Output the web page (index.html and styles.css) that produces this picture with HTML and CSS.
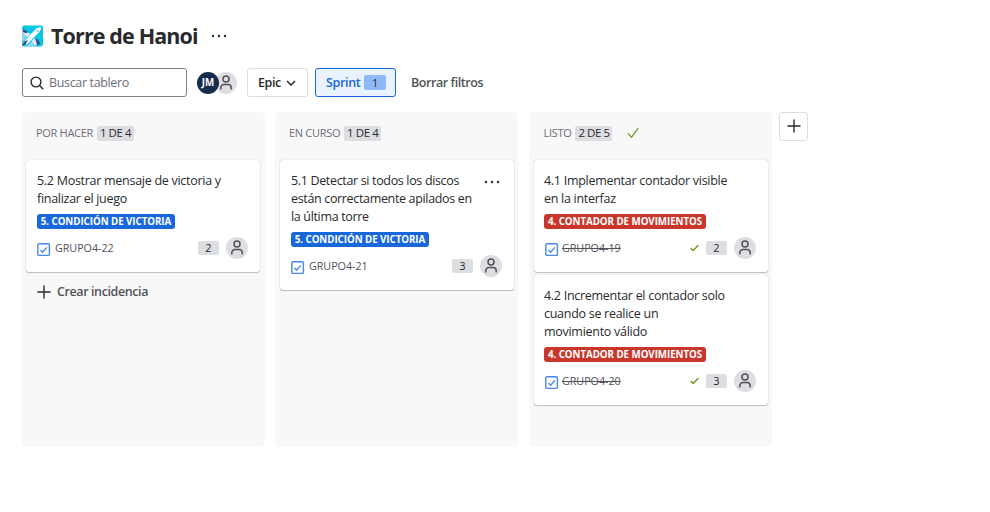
FILE: index.html
```html
<!DOCTYPE html>
<html lang="es">
<head>
<meta charset="utf-8">
<title>Torre de Hanoi</title>
<link rel="stylesheet" href="styles.css">
</head>
<body>
<svg width="0" height="0" class="defs">
  <symbol id="person" viewBox="0 0 22 22"><g fill="none" stroke="#505258" stroke-width="1.5"><circle cx="11" cy="7" r="3"/><path d="M5.800 17.500v-1.700a3.200 3.200 0 0 1 3.200-3.200h4a3.200 3.200 0 0 1 3.200 3.200v1.700"/></g></symbol>
  <symbol id="task" viewBox="0 0 14 14"><rect x=".8" y=".8" width="11.6" height="11.6" rx="1.2" fill="#fff" stroke="#4688ec" stroke-width="1.4"/><path d="M3.500 7l2.200 2.300L9.800 4.400" fill="none" stroke="#4688ec" stroke-width="1.4"/></symbol>
  <symbol id="check" viewBox="0 0 14 14"><path d="M1 7.500L5.200 12 13 1.500" fill="none" stroke="#6a9a23" stroke-width="1.5"/></symbol>
  <symbol id="tick" viewBox="0 0 9 8"><path d="M.7 4l2.500 2.500L8.300 1.300" fill="none" stroke="#6a9a23" stroke-width="1.5"/></symbol>
  <symbol id="plus" viewBox="0 0 14 14"><path d="M7 .5v13M.5 7h13" fill="none" stroke="#292a2e" stroke-width="1.4"/></symbol>
  <symbol id="dots" viewBox="0 0 16 4"><g fill="#292a2e"><circle cx="2" cy="2" r="1.2"/><circle cx="8" cy="2" r="1.2"/><circle cx="14" cy="2" r="1.2"/></g></symbol>
</svg>
<header class="title-row">
  <svg class="project" viewBox="0 0 22 22"><rect width="22" height="22" rx="2.5" fill="#00c7e6"/><path d="M0 4l4 1 3 3-3 6-4 3zM4 22l7-6 4-1 1 5-3 2z" fill="#8fd3f0"/><path d="M1 18L14 4q3-3 6-2 0 3-2 5L5 20l-3 1z" fill="#fff"/><path d="M9 9L2 6 1 8l5 4zM13 13l3 6-2 2-4-5z" fill="#deebff"/><path d="M1 4l5 2-1 2-4-1zM14 14l3 1 2 4-3 2zM2 17l4-2-2 5-4 2z" fill="#344f86"/><path d="M15.500 4.500l2 2" stroke="#4c6cae"/></svg>
  <h1>Torre de Hanoi</h1>
  <svg class="dots"><use href="#dots"/></svg>
</header>
<div class="toolbar">
  <div class="search"><svg viewBox="0 0 14 14"><circle cx="6" cy="6" r="4.900"/><path d="M9.600 9.600l3.700 3.700"/></svg><span>Buscar tablero</span></div>
  <div class="people"><span class="jm">JM</span><span class="avatar"><svg><use href="#person"/></svg></span></div>
  <button class="epic-filter"><span>Epic</span><svg viewBox="0 0 10 6"><path d="M1 1l4 4 4-4"/></svg></button>
  <button class="sprint"><span>Sprint</span><b>1</b></button>
  <span class="clear">Borrar filtros</span>
</div>
<main class="board">
  <section class="column">
    <h2><span>POR HACER</span><b>1 DE 4</b></h2>
    <article class="card">
      <p>5.2 Mostrar mensaje de victoria y<br>finalizar el juego</p>
      <div class="tag blue">5. CONDICIÓN DE VICTORIA</div>
      <footer><svg class="task"><use href="#task"/></svg><span class="key">GRUPO4-22</span><b class="points">2</b><span class="avatar"><svg><use href="#person"/></svg></span></footer>
    </article>
    <div class="create"><svg><use href="#plus"/></svg><span>Crear incidencia</span></div>
  </section>
  <section class="column middle">
    <h2><span>EN CURSO</span><b>1 DE 4</b></h2>
    <article class="card tall">
      <svg class="dots menu"><use href="#dots"/></svg>
      <p>5.1 Detectar si todos los discos<br>están correctamente apilados en<br>la última torre</p>
      <div class="tag blue">5. CONDICIÓN DE VICTORIA</div>
      <footer><svg class="task"><use href="#task"/></svg><span class="key">GRUPO4-21</span><b class="points">3</b><span class="avatar"><svg><use href="#person"/></svg></span></footer>
    </article>
  </section>
  <section class="column last">
    <h2><span>LISTO</span><b>2 DE 5</b><svg><use href="#check"/></svg></h2>
    <article class="card">
      <p>4.1 Implementar contador visible<br>en la interfaz</p>
      <div class="tag red">4. CONTADOR DE MOVIMIENTOS</div>
      <footer><svg class="task"><use href="#task"/></svg><span class="key done">GRUPO4-19</span><svg class="tick"><use href="#tick"/></svg><b class="points">2</b><span class="avatar"><svg><use href="#person"/></svg></span></footer>
    </article>
    <article class="card tall">
      <p>4.2 Incrementar el contador solo<br>cuando se realice un<br>movimiento válido</p>
      <div class="tag red">4. CONTADOR DE MOVIMIENTOS</div>
      <footer><svg class="task"><use href="#task"/></svg><span class="key done">GRUPO4-20</span><svg class="tick"><use href="#tick"/></svg><b class="points">3</b><span class="avatar"><svg><use href="#person"/></svg></span></footer>
    </article>
  </section>
  <button class="add"><svg><use href="#plus"/></svg></button>
</main>
</body>
</html>
```
FILE: styles.css
```css
* { box-sizing: border-box; }
body { margin: 0; padding: 24px 22px 0; background: #fff; color: #292a2e; font: 12.5px/18px "Open Sans", "Noto Sans", sans-serif; white-space: nowrap; }
svg { display: block; flex: none; }
.defs { position: absolute; }
button { background: #fff; font: inherit; color: inherit; padding: 0; }
.title-row { display: flex; align-items: center; height: 24px; }
.project { width: 21px; height: 22px; }
h1 { margin: 0 0 0 8px; width: 148px; font-size: 21.5px; line-height: 24px; font-weight: 700; letter-spacing: -0.87px; }
.dots { width: 16px; height: 4px; }
.title-row .dots { margin-left: 12px; }
.toolbar { display: flex; align-items: center; height: 29px; margin-top: 20px; }
.search { display: flex; align-items: center; width: 165px; height: 29px; padding: 1px 0 0 7px; border: 1px solid #7d818a; border-radius: 3px; color: #6b6e76; }
.search svg { width: 14px; height: 14px; margin-right: 5px; fill: none; stroke: #292a2e; stroke-width: 1.4; }
.search span { letter-spacing: -0.35px; }
.people { display: flex; align-items: center; margin-left: 10px; width: 50px; }
.jm { position: relative; z-index: 1; width: 22px; height: 22px; border-radius: 50%; background: #172b4d; color: #fff; font-size: 9.75px; line-height: 22px; font-weight: 700; text-align: center; }
.avatar { display: block; width: 22px; height: 22px; border-radius: 50%; background: #dddee1; }
.avatar svg { width: 22px; height: 22px; }
.people .avatar { margin-left: -4px; }
.epic-filter, .sprint { display: flex; align-items: center; height: 29px; border: 1px solid #dddee1; border-radius: 3px; font-weight: 600; }
.epic-filter { width: 61px; padding-left: 10px; letter-spacing: -0.4px; }
.epic-filter svg { width: 10px; height: 6px; margin-left: 5px; fill: none; stroke: #292a2e; stroke-width: 1.5; }
.sprint { width: 81px; margin-left: 7px; padding-left: 10px; color: #1868db; background: #e9f2fe; border-color: #1868db; letter-spacing: -0.35px; }
.sprint span { width: 38px; text-align: left; }
.sprint b { width: 22px; height: 15px; border-radius: 2px; background: #8fb8f6; color: #292a2e; font-size: 11px; line-height: 15px; font-weight: 400; }
.clear { margin-left: 15px; color: #505258; font-weight: 600; letter-spacing: -0.43px; }
.board { display: flex; margin-top: 15px; height: 335px; }
.column { width: 243px; margin-right: 10px; padding: 0 5px 0 4px; background: #f8f8f8; border-radius: 5px; }
.column.last { margin-left: 1px; margin-right: 7px; }
.middle, .column.last { padding-left: 5px; padding-right: 4px; }
h2 { display: flex; align-items: center; height: 42px; margin: 0 0 6px; padding-left: 10px; color: #6b6e76; font-size: 11px; line-height: 16px; font-weight: 400; letter-spacing: -0.3px; }
.middle h2 { padding-left: 9px; }
.last h2 { padding-left: 9.500px; }
h2 b { width: 37px; height: 15px; margin-left: 4px; border-radius: 2px; background: #dddee1; color: #292a2e; font-size: 11.5px; line-height: 14px; font-weight: 400; letter-spacing: -0.45px; text-align: center; }
h2 svg { width: 14px; height: 12px; margin-left: 14px; }
.card { position: relative; height: 112px; margin-bottom: 3px; padding: 12px 12px 0 11px; background: #fff; border-radius: 3px; box-shadow: 0 1px 1px #1e1f2140, 0 0 1px #1e1f214f; }
.card.tall { height: 130px; }
.last .card { padding-left: 10px; }
.card p { margin: 0 0 6px; letter-spacing: -0.28px; }
.middle .card p { letter-spacing: -0.34px; }
.tag { width: 138px; height: 15px; border-radius: 3px; color: #fff; font-size: 9.75px; line-height: 15px; font-weight: 700; letter-spacing: -0.05px; text-align: center; }
.blue { background: #1868db; }
.red { width: 162px; background: #c9372c; }
.card footer { display: flex; align-items: center; height: 22px; margin-top: 8px; }
.task { width: 14px; height: 14px; margin: 3px 4px 0 0; }
.last .task { margin-left: 1px; margin-right: 3px; }
.key { margin-right: auto; color: #505258; font-size: 10.75px; letter-spacing: -0.04px; }
.done { text-decoration: line-through; }
.tick { width: 9px; height: 8px; margin-right: 7px; }
.points { width: 21px; height: 14px; margin-right: 7px; border-radius: 2px; background: #dddee1; font-size: 11px; line-height: 14px; font-weight: 400; text-align: center; }
.menu { position: absolute; right: 14px; top: 20px; }
.create { display: flex; align-items: center; height: 32px; padding: 1px 0 0 11px; color: #505258; font-weight: 600; letter-spacing: -0.4px; }
.create svg { width: 14px; height: 14px; margin-right: 6px; }
.add { display: flex; align-items: center; justify-content: center; width: 29px; height: 29px; border: 1px solid #dddee1; border-radius: 3px; }
.add svg { width: 14px; height: 14px; margin-top: -1px; }
```
